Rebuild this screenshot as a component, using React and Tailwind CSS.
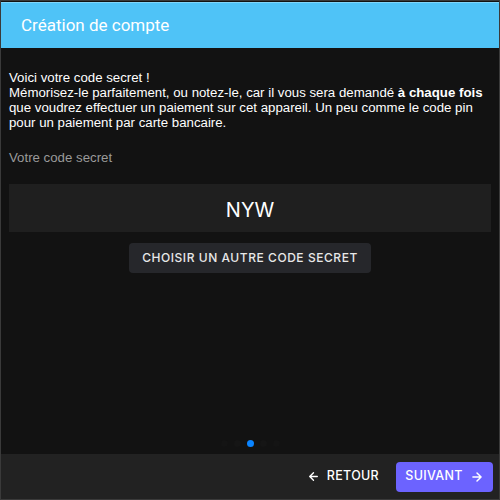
import React from "react";

export default function App() {
  return (
    <div className="w-[500px] h-[500px] bg-[#121212] border border-[#3a3a3a] flex flex-col overflow-hidden" style={{ fontFamily: '"Liberation Sans", Arial, sans-serif' }}>
      <div className="mt-[1px] mx-0 h-[46px] bg-[#4fc3f7] border-t border-[#7fd6fb] flex items-center pl-[20px]">
        <span className="text-white text-[17px]" style={{ fontFamily: 'Roboto, "Liberation Sans", sans-serif' }}>Création de compte</span>
      </div>
      <div className="flex-1 flex flex-col px-[8px]">
        <p className="mt-[22px] text-white text-[13.25px] leading-[15px]">
          Voici votre code secret !<br />
          Mémorisez-le parfaitement, ou notez-le, car il vous sera demandé <b>à chaque fois</b> que voudrez effectuer un paiement sur cet appareil. Un peu comme le code pin pour un paiement par carte bancaire.
        </p>
        <div className="mt-[20px] text-[#9a9a9a] text-[13.25px] leading-[15px]">Votre code secret</div>
        <div className="mt-[19px] h-[48px] bg-[#1f1f1f] flex items-center justify-center pt-[4px]">
          <span className="text-white text-[20px]" style={{ fontFamily: 'Inter, sans-serif' }}>NYW</span>
        </div>
        <div className="mt-[11px] flex justify-center">
          <button className="h-[30px] px-[13px] bg-[#26272b] rounded-[4px] text-[#e8e8e8] text-[12px] tracking-[0.55px] font-medium" style={{ fontFamily: 'Inter, sans-serif' }}>
            CHOISIR UN AUTRE CODE SECRET
          </button>
        </div>
        <div className="flex-1" />
        <div className="flex justify-center items-center gap-[6px] mb-[7px]">
          <span className="w-[7px] h-[7px] rounded-full bg-[#141414]" />
          <span className="w-[7px] h-[7px] rounded-full bg-[#151515]" />
          <span className="w-[7px] h-[7px] rounded-full bg-[#0a84ff]" />
          <span className="w-[7px] h-[7px] rounded-full bg-[#151515]" />
          <span className="w-[7px] h-[7px] rounded-full bg-[#141414]" />
        </div>
      </div>
      <div className="h-[45px] bg-[#222222] flex items-center justify-end pr-[6px] gap-[17px]" style={{ fontFamily: 'Inter, sans-serif' }}>
        <button className="flex items-center gap-[7px] text-white text-[12.5px] tracking-[0.3px] font-medium">
          <svg width="13" height="13" viewBox="0 0 24 24" fill="none" stroke="currentColor" strokeWidth="2.5" strokeLinecap="round" strokeLinejoin="round"><path d="M19 12H5M12 19l-7-7 7-7" /></svg>
          RETOUR
        </button>
        <button className="h-[30px] w-[97px] bg-[#6c63ff] rounded-[4px] flex items-center justify-center gap-[7px] text-white text-[12.5px] tracking-[0.3px] font-medium">
          SUIVANT
          <svg width="14" height="14" viewBox="0 0 24 24" fill="none" stroke="currentColor" strokeWidth="2.5" strokeLinecap="round" strokeLinejoin="round"><path d="M5 12h14M12 5l7 7-7 7" /></svg>
        </button>
      </div>
    </div>
  );
}
